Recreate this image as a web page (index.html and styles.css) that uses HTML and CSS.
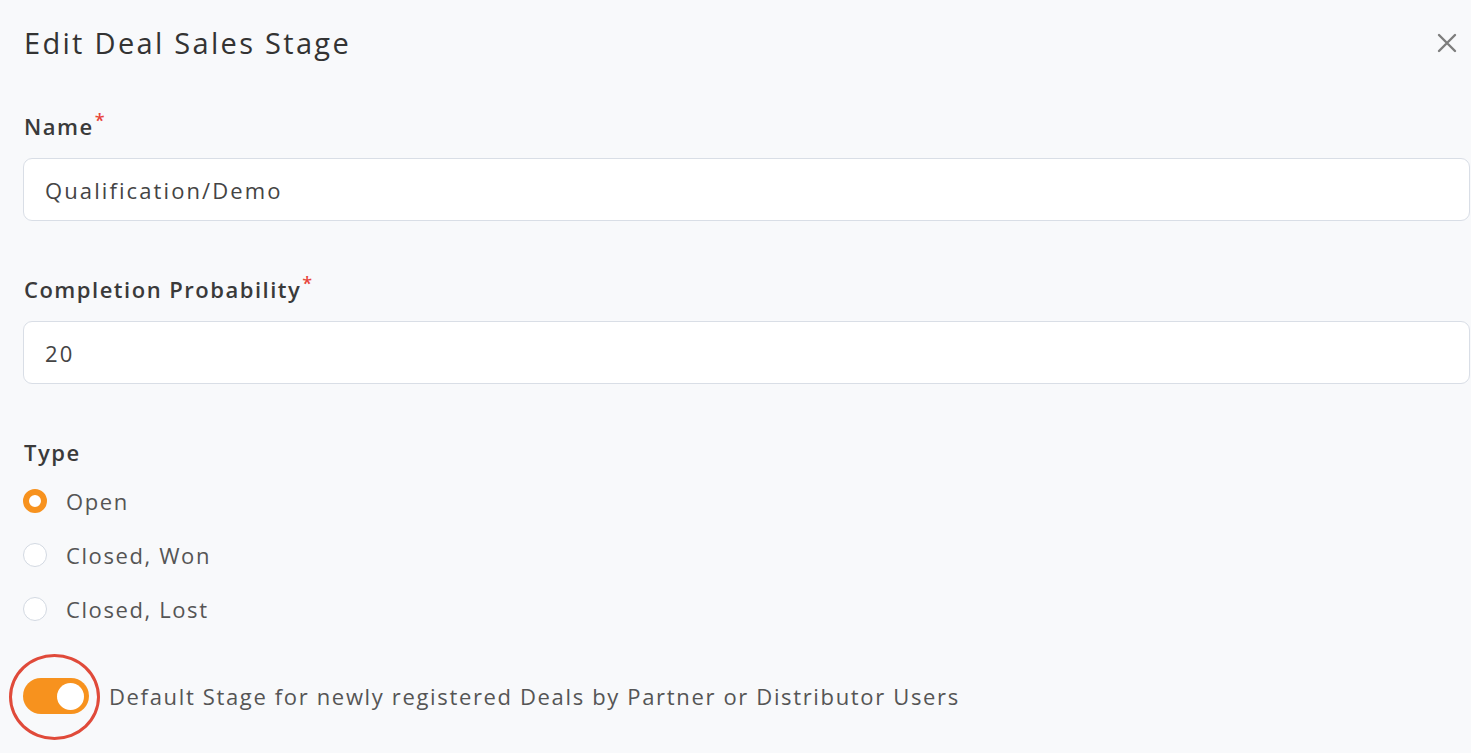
FILE: index.html
```html
<!DOCTYPE html>
<html lang="en">

<head>
	<meta charset="UTF-8">
	<meta name="viewport" content="width=device-width, initial-scale=1.0">
	<title>Edit Deal Sales Stage</title>
	<link rel="stylesheet" href="styles.css">
</head>

<body>
	<div class="modal">
		<div class="modal-header">
			<h2 class="modal-title">Edit Deal Sales Stage</h2>
			<button class="close-button" type="button" aria-label="Close">
				<svg width="20" height="20" viewBox="0 0 20 20">
					<path d="M2 2 L18 18 M18 2 L2 18" stroke="#7d7d7d" stroke-width="2.4" stroke-linecap="round" fill="none" />
				</svg>
			</button>
		</div>
		<form class="form">
			<div class="field">
				<label class="field-label" for="name">Name<span class="required">*</span></label>
				<input class="text-input" type="text" id="name" value="Qualification/Demo">
			</div>
			<div class="field">
				<label class="field-label" for="probability">Completion Probability<span class="required">*</span></label>
				<input class="text-input" type="text" id="probability" value="20">
			</div>
			<div class="field">
				<span class="field-label">Type</span>
				<div class="radio-list">
					<label class="radio-row"><span class="radio checked"></span>Open</label>
					<label class="radio-row"><span class="radio"></span>Closed, Won</label>
					<label class="radio-row"><span class="radio"></span>Closed, Lost</label>
				</div>
			</div>
			<div class="toggle-row">
				<span class="toggle">
					<span class="toggle-knob"></span>
					<span class="highlight-ring"></span>
				</span>
				<span class="toggle-label">Default Stage for newly registered Deals by Partner or Distributor Users</span>
			</div>
		</form>
	</div>
</body>

</html>
```

FILE: styles.css
```css
* {
	margin: 0;
	padding: 0;
	box-sizing: border-box;
}

body {
	background: #f8f9fb;
	font-family: "Open Sans", "Noto Sans", sans-serif;
	color: #333;
	min-height: 100vh;
}

.modal {
	padding: 0 1px 39px 23px;
}

.modal-header {
	display: flex;
	align-items: center;
	justify-content: space-between;
	height: 86px;
	padding-left: 1px;
	padding-right: 13px;
}

.modal-title {
	font-size: 29px;
	line-height: 36px;
	font-weight: 500;
	color: #333;
	letter-spacing: 2.3px;
}

.close-button {
	border: none;
	background: none;
	display: flex;
	cursor: pointer;
}

.form {
	display: flex;
	flex-direction: column;
}

.field {
	display: flex;
	flex-direction: column;
}

.field+.field {
	margin-top: 53px;
}

.form>.field:first-child {
	margin-top: 25px;
}

.field-label {
	font-size: 22px;
	line-height: 30px;
	height: 30px;
	font-weight: 600;
	color: #3a3a3a;
	padding-left: 1px;
	margin-bottom: 17px;
	letter-spacing: 1.5px;
}

.required {
	position: relative;
	top: -8px;
	color: #e8453c;
	font-size: 18px;
	margin-left: 1px;
}

.text-input {
	height: 63px;
	width: 100%;
	border: 1.5px solid #d9dee6;
	border-radius: 9px;
	background: white;
	padding: 0 21px;
	font-family: inherit;
	font-size: 22px;
	letter-spacing: 2.1px;
	color: #444;
	outline: none;
}

.radio-list {
	display: flex;
	flex-direction: column;
	margin-top: -10px;
}

.radio-row {
	display: flex;
	align-items: center;
	height: 54px;
	gap: 19px;
	font-size: 22px;
	letter-spacing: 1.6px;
	color: #555;
}

.radio {
	width: 24px;
	height: 24px;
	border-radius: 50%;
	border: 1.5px solid #d3d9e2;
	background: white;
}

.radio.checked {
	border: 6.5px solid #f7921e;
}

.toggle-row {
	display: flex;
	align-items: center;
	gap: 20px;
	margin-top: 42px;
}

.toggle {
	position: relative;
	display: flex;
	align-items: center;
	justify-content: flex-end;
	width: 66px;
	height: 36px;
	border-radius: 18px;
	background: #f7921e;
	padding-right: 5px;
}

.toggle-knob {
	width: 27px;
	height: 27px;
	border-radius: 50%;
	background: white;
}

.highlight-ring {
	position: absolute;
	left: -14px;
	top: -24px;
	width: 91px;
	height: 86px;
	border: 3px solid #e04a3a;
	border-radius: 50%;
}

.toggle-label {
	font-size: 22px;
	letter-spacing: 1.65px;
	color: #555;
}
```
